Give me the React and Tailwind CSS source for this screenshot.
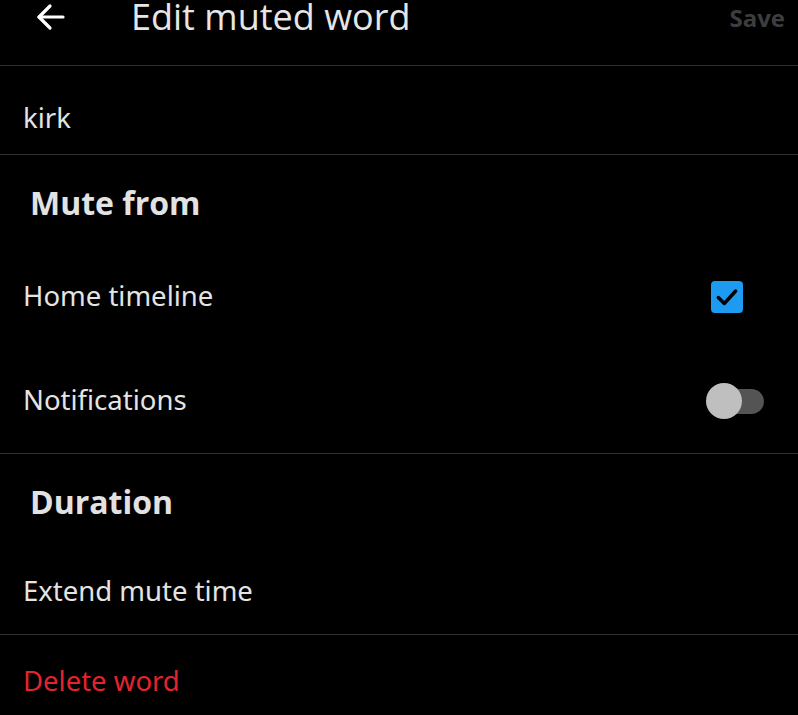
import React from "react";

const ArrowLeft = () => (
  <svg width="30" height="28" viewBox="0 0 30 28" fill="none" stroke="#ffffff" strokeWidth={3.2} strokeLinecap="round" strokeLinejoin="round">
    <line x1="3" y1="14" x2="27" y2="14" />
    <polyline points="14,3 3,14 14,25" />
  </svg>
);

const Check = () => (
  <svg width="26" height="26" viewBox="0 0 24 24" fill="none" stroke="#000000" strokeWidth={3.2} strokeLinecap="round" strokeLinejoin="round">
    <polyline points="4,12.5 9.5,18 20,6.5" />
  </svg>
);

const body = { fontFamily: "'Noto Sans', 'Open Sans', sans-serif" };
const head = { fontFamily: "'Open Sans', 'Noto Sans', sans-serif" };

export default function App() {
  return (
    <div className="w-[798px] h-[715px] overflow-hidden bg-black text-[#e4e4e4]" style={body}>
      <div className="h-[66px] flex items-start border-b border-[#2f2f2f]">
        <div className="w-[131px] pl-[36px] pt-[3px]">
          <ArrowLeft />
        </div>
        <div className="flex-1 text-[36px] leading-[34px] text-[#e6e6e6]" style={head}>Edit muted word</div>
        <div className="pr-[13px] pt-[3px] text-[24px] leading-[30px] font-bold text-[#3d3d3d]" style={head}>Save</div>
      </div>

      <div className="h-[89px] flex items-center pl-[23px] border-b border-[#2f2f2f] text-[27.5px] pt-[15px]">kirk</div>

      <div className="h-[96px] flex items-center pl-[30px] text-[32px] font-bold text-[#e2e2e2]" style={head}>Mute from</div>

      <div className="h-[92px] flex items-center justify-between pl-[23px] pr-[55px] text-[27.5px]">
        <span className="-mt-[2px]">Home timeline</span>
        <div className="w-[32px] h-[32px] rounded-[4px] bg-[#1d9bf0] flex items-center justify-center">
          <Check />
        </div>
      </div>

      <div className="h-[111px] flex items-center justify-between pl-[23px] pr-[34px] pt-[6px] border-b border-[#2f2f2f] text-[27.5px]">
        <span className="-mt-[2px]">Notifications</span>
        <div className="relative w-[58px] h-[36px] flex items-center">
          <div className="absolute right-0 w-[42px] h-[25px] rounded-full bg-[#545454]" />
          <div className="absolute left-0 w-[36px] h-[36px] rounded-full bg-[#bfbfbf]" />
        </div>
      </div>

      <div className="h-[96px] flex items-center pl-[30px] text-[32px] font-bold text-[#e2e2e2]" style={head}>Duration</div>

      <div className="h-[85px] flex items-center pl-[23px] border-b border-[#2f2f2f] text-[27.5px] pb-[3px]">Extend mute time</div>

      <div className="h-[94px] flex items-center pl-[23px] text-[27.5px] text-[#e3242e] pb-[2px]">Delete word</div>
    </div>
  );
}
